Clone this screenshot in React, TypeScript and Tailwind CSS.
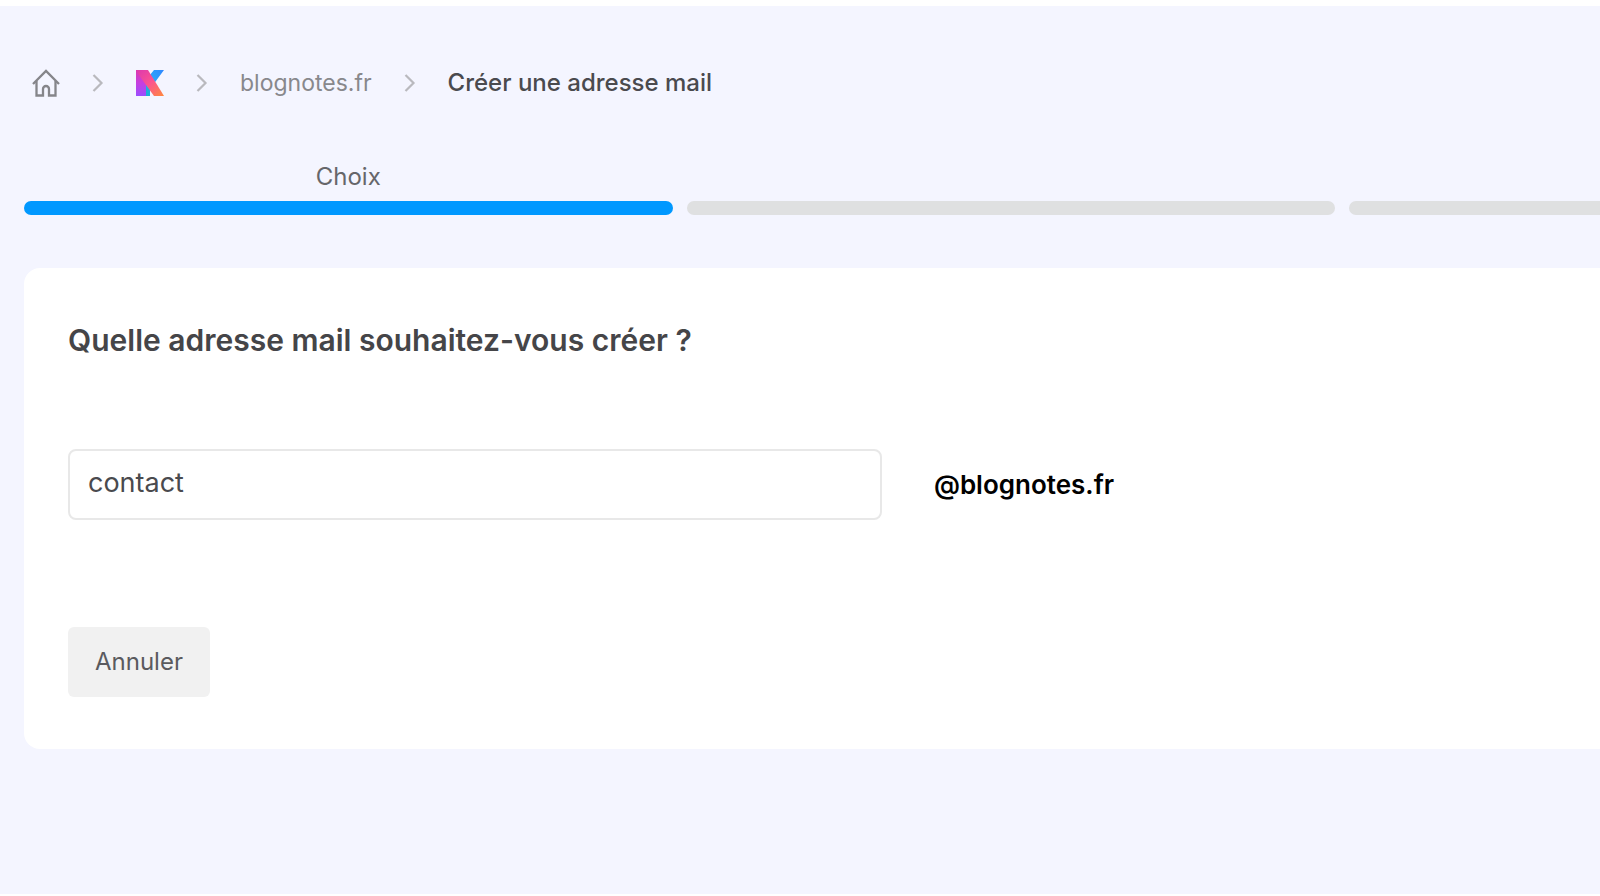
import React, { useState } from 'react';

const steps = [
  { id: 'choix', label: 'Choix', active: true },
  { id: 'step-2', label: '', active: false },
  { id: 'step-3', label: '', active: false },
];

const Chevron: React.FC = () => (
  <svg className="w-3 h-5 shrink-0" viewBox="0 0 12 20" fill="none" stroke="#b9b9be" strokeWidth="2.2" aria-hidden="true">
    <path d="M1.500 2l8 8-8 8" />
  </svg>
);

const HomeIcon: React.FC = () => (
  <svg className="w-7 h-7" viewBox="0 0 28 28" fill="none" stroke="#85858a" strokeWidth="2.3" aria-hidden="true">
    <path d="M1 15L14 2l13 13" />
    <path d="M4.500 12v14.500H11V20a3 3 0 0 1 6 0v6.500h6.500V12" />
  </svg>
);

const KLogo: React.FC = () => (
  <svg className="w-7 h-7" viewBox="0 0 28 28" aria-hidden="true">
    <defs>
      <linearGradient id="kStem" x1="0" y1="0" x2="0" y2="1">
        <stop offset="0" stopColor="#dc38b0" />
        <stop offset="0.5" stopColor="#c63fe0" />
        <stop offset="1" stopColor="#9b4dff" />
      </linearGradient>
      <linearGradient id="kArm" x1="1" y1="0" x2="0" y2="1">
        <stop offset="0" stopColor="#2f86ff" />
        <stop offset="0.5" stopColor="#2ba6fb" />
        <stop offset="1" stopColor="#15b5c9" />
      </linearGradient>
      <linearGradient id="kLeg" x1="0" y1="0" x2="1" y2="1">
        <stop offset="0" stopColor="#dc38b0" />
        <stop offset="0.5" stopColor="#fb5390" />
        <stop offset="1" stopColor="#ff8a3d" />
      </linearGradient>
    </defs>
    <path d="M18 1h10L14 20v7H9V12z" fill="url(#kArm)" />
    <path d="M0 1h10v26H0z" fill="url(#kStem)" />
    <path d="M0 1h12l16 26H18L5 9z" fill="url(#kLeg)" />
  </svg>
);

const Breadcrumb: React.FC = () => (
  <nav aria-label="Fil d'Ariane" className="flex items-center text-[23px] leading-9">
    <a href="#" aria-label="Accueil" className="ml-2 mr-8"><HomeIcon /></a>
    <Chevron />
    <a href="#" aria-label="kSuite" className="mx-8"><KLogo /></a>
    <Chevron />
    <a href="#" className="mx-8 text-[#88888c]">blognotes.fr</a>
    <Chevron />
    <span aria-current="page" className="ml-8 text-2xl font-medium text-[#4a4a4e]">Créer une adresse mail</span>
  </nav>
);

const Stepper: React.FC = () => (
  <ol className="mt-[60px] flex items-end gap-[14px] overflow-hidden">
    {steps.map((step) => (
      <li key={step.id} className="w-[41.15%] shrink-0 text-center text-2xl text-[#66666a]">
        {step.label}
        <div className={step.active ? 'mt-2 h-[14px] rounded-full bg-[#0098ff]' : 'mt-2 h-[14px] rounded-full bg-[#dfe0e1]'} />
      </li>
    ))}
  </ol>
);

export default function App() {
  const [name, setName] = useState('contact');

  return (
    <div className="min-h-screen flex flex-col bg-white pt-[6px] pb-[2px] font-['Inter',sans-serif]">
      <main className="grow bg-[#f4f5ff] pl-6 pt-[59px]">
        <Breadcrumb />
        <Stepper />

        <form className="mt-[53px] rounded-l-2xl bg-white px-11 py-[52px]" onSubmit={(e) => e.preventDefault()}>
          <h1 className="text-[30px] leading-10 font-semibold text-[#454548]">
            <label htmlFor="mail-name">Quelle adresse mail souhaitez-vous créer ?</label>
          </h1>

          <div className="mt-[89px] flex items-center">
            <input
              id="mail-name"
              type="text"
              value={name}
              onChange={(e) => setName(e.target.value)}
              className="h-[71px] w-[54.7%] rounded-lg border-2 border-[#e8e8e8] px-[18px] pb-1 text-[27px] text-[#4a4a4e] outline-none"
            />
            <span className="ml-13 text-[26px] font-semibold text-black">@blognotes.fr</span>
          </div>

          <button type="button" className="mt-[107px] block h-[70px] rounded-md bg-[#f1f1f1] px-[27px] text-2xl text-[#5a5a5e]">
            Annuler
          </button>
        </form>
      </main>
    </div>
  );
}
